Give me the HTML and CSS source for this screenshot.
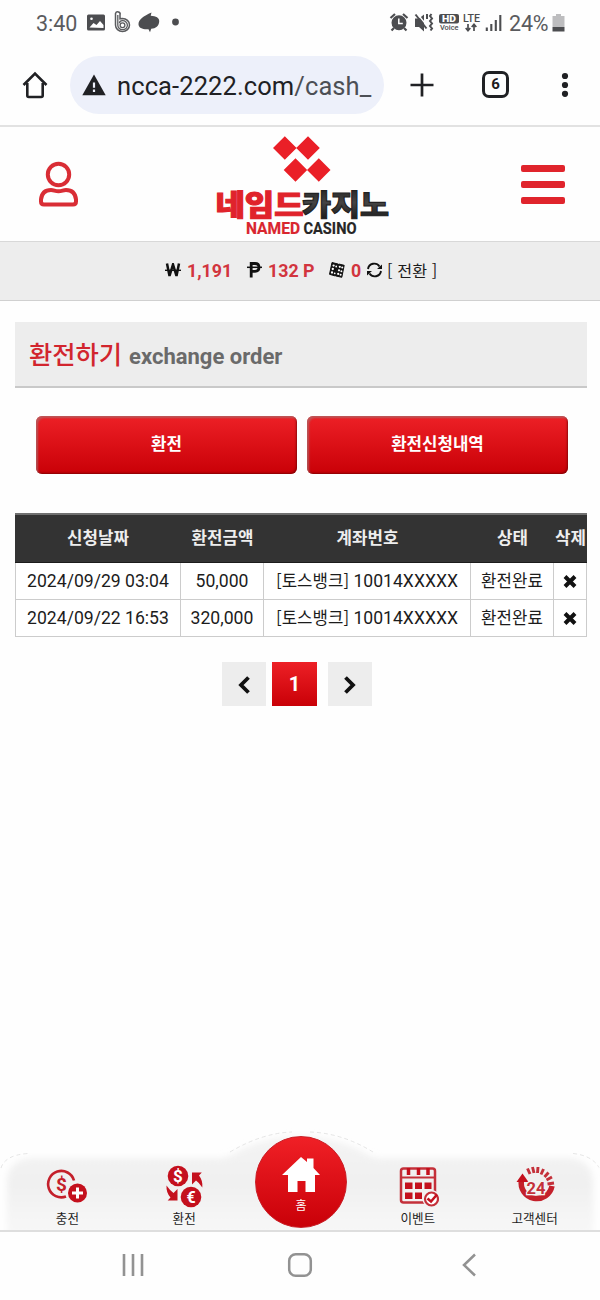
FILE: index.html
```
<!DOCTYPE html>
<html lang="ko">
<head>
<meta charset="utf-8">
<title>환전하기</title>
<link rel="stylesheet" href="styles.css">
</head>
<body>
<div class="status">
  <span class="status-time">3:40</span>
  <svg class="status-left" width="100" height="30" viewBox="82 8 100 30">
    <rect x="87" y="14.500" width="18" height="16" rx="1.500" fill="#4c4d50"/>
    <path d="M89.500 27.500l4-4.500 3 2 3.500-4 3.500 4v3z" fill="#fff"/><circle cx="91.500" cy="18.800" r="1.300" fill="#fff"/>
    <path d="M115.500 13.500v11.500a7 6.500 0 1 0 7-6.500l-2.500.300V15a2.200 2.200 0 0 0-4.500-1.500z" fill="#fff" stroke="#5a5b5e" stroke-width="1.500"/>
    <path d="M117.800 15v10a4.800 4.500 0 1 0 4.700-4.300c-2 0-3 1-3 2.500" fill="none" stroke="#5a5b5e" stroke-width="1.300"/>
    <circle cx="122.500" cy="25.200" r="2.400" fill="none" stroke="#5a5b5e" stroke-width="1.300"/>
    <path d="M151.500 12.500l-.8 3.300c5.300.2 8.800 2.200 8.500 5.700-.2 4.500-3.500 7-8 7.300l-1.200 3.400-1.500-3c-5.500.5-9.800-1.200-10-4.700-.2-5 5-8.500 13-12z" fill="#4c4d50"/>
    <circle cx="175.500" cy="22" r="3.400" fill="#4c4d50"/>
  </svg>
  <svg class="status-right" width="116" height="30" viewBox="388 8 116 30">
    <g fill="none" stroke="#4c4d50"><circle cx="399" cy="22.800" r="6.500" fill="#4c4d50" stroke-width="2"/><path d="M390.500 18l4.500-4M407.500 18l-4.500-4M394 28l-2.500 2.500M404 28l2.500 2.500" stroke-width="2.200"/><path d="M398.800 18.500v5h4" stroke="#fff" stroke-width="1.500"/></g>
    <path d="M415 18.500h4l5-4v17l-5-4.500h-4z" fill="#4c4d50"/>
    <path d="M417.500 14l9 11" stroke="#fff" stroke-width="1.300"/><path d="M415.500 14.500l11 14" stroke="#4c4d50" stroke-width="2"/>
    <path d="M427 14v5M431.500 14l-1.500 2 2 2.500-2 2.500 2 2.500-2 2.500 2 2.500-1.500 2" fill="none" stroke="#4c4d50" stroke-width="2"/>
    <rect x="439" y="14" width="20" height="9.500" rx="2" fill="#4c4d50"/>
    <text x="442" y="21.800" textLength="14" lengthAdjust="spacingAndGlyphs" class="tiny hd">HD</text>
    <text x="440" y="30" textLength="18.500" lengthAdjust="spacingAndGlyphs" class="tiny voice">Voice</text>
    <text x="463" y="21.700" textLength="17" lengthAdjust="spacingAndGlyphs" class="tiny lte">LTE</text>
    <path d="M468 24v6.500M465.700 28l2.300 2.700 2.300-2.700M474 31v-6.500M471.700 27l2.300-2.700 2.300 2.700" fill="none" stroke="#4c4d50" stroke-width="1.700"/>
    <path d="M486.800 27.500v3.500M491.300 24v7M495.800 20v11M500.300 15v16" stroke="#4c4d50" stroke-width="2.100"/>
  </svg>
  <span class="status-pct">24%</span>
  <svg class="battery" width="13" height="20" viewBox="0 0 13 20"><path d="M4 1h5v2h3.500v11H.5V3H4z" fill="#bdbdbf"/><path d="M.5 14h12v4.500H.5z" fill="#4c4d50"/></svg>
</div>
<div class="browser">
  <svg class="b-home" width="28" height="28" viewBox="0 0 28 28"><path d="M2.500 14L14 2.500 25.500 14M6.300 12v12.500q0 1.500 1.500 1.500h12.400q1.500 0 1.500-1.500V12" fill="none" stroke="#202124" stroke-width="2.600"/></svg>
  <div class="url">
    <svg width="24" height="22" viewBox="0 0 24 22"><path d="M12 .5L23.700 21.300H.3z" fill="#202124"/><path d="M12 8.500v5.200M12 15.500v2.500" stroke="#edf0fa" stroke-width="2.200"/></svg>
    <span>ncca-2222.com<i>/cash_</i></span>
  </div>
  <svg class="b-plus" width="24" height="24" viewBox="0 0 24 24"><path d="M12 0.500v23M.5 12h23" stroke="#202124" stroke-width="2.700"/></svg>
  <span class="tabs">6</span>
  <svg class="b-more" width="8" height="26" viewBox="0 0 8 26"><g fill="#202124"><circle cx="4" cy="4" r="3.100"/><circle cx="4" cy="13" r="3.100"/><circle cx="4" cy="21.800" r="3.100"/></g></svg>
</div>
<header class="site">
  <svg class="user" width="40" height="46" viewBox="0 0 40 46" fill="none" stroke="#d92d35" stroke-width="4"><circle cx="19.500" cy="13.500" r="10.700"/><path d="M5 43.500h29q3 0 3-3v-2q-1-9.500-10-9.500c-3 0-4 1.200-7.500 1.200S15 29 12 29Q3 29 2 38.500v2q0 3 3 3z"/></svg>
  <svg class="logo" width="176" height="106" viewBox="215 132 176 106">
    <defs><linearGradient id="dark" x1="0" y1="0" x2="0" y2="1"><stop offset="0" stop-color="#161616"/><stop offset=".5" stop-color="#444"/><stop offset="1" stop-color="#111"/></linearGradient></defs>
    <path d="M284.800 136.300l11.800 11.700-11.800 11.800L273 148zM308 136.300l11.800 11.700-11.800 11.800-11.800-11.800zM295.500 158.200l11.700 11.700-11.700 11.800-11.800-11.800zM318.800 158.200l11.700 11.700-11.700 11.800-11.800-11.800z" fill="#ea1f27"/>
    <text x="215.500" y="215.500" textLength="88" lengthAdjust="spacingAndGlyphs" class="logo-ko" fill="#e0232b" stroke="#e0232b">네임드</text>
    <text x="302" y="215.500" textLength="87" lengthAdjust="spacingAndGlyphs" class="logo-ko" fill="url(#dark)" stroke="#222">카지노</text>
    <text x="246" y="234" textLength="54" lengthAdjust="spacingAndGlyphs" class="logo-en" fill="#d9262e" stroke="#d9262e">NAMED</text>
    <text x="303.500" y="234" textLength="53" lengthAdjust="spacingAndGlyphs" class="logo-en" fill="#262626" stroke="#262626">CASINO</text>
  </svg>
  <span class="menu"><b></b><b></b><b></b></span>
</header>
<div class="balance">
  <svg class="won" width="16" height="15" viewBox="0 0 16 15"><path d="M2 .5l2.500 12.500L8 1.500l3.500 11.500L14 .5" fill="none" stroke="#111" stroke-width="2.500"/><path d="M0 7.300h16" stroke="#111" stroke-width="1.400"/></svg>
  <strong class="cash">1,191</strong>
  <svg class="peso" width="15" height="16" viewBox="0 0 15 16"><path d="M4.200 15.500V1.500H8q4 0 4 3.800T8 9.300H4" fill="none" stroke="#111" stroke-width="2.800"/><path d="M0 5.300h15" stroke="#111" stroke-width="1.500"/></svg>
  <strong class="point">132 P</strong>
  <svg class="dice" width="16" height="16" viewBox="0 0 16 16"><path d="M3 .500L9 2 6.500 14 .5 12.300z" fill="#111" stroke="#111"/><path d="M9.700 2l5.500 1.300-2.400 12L7 14z" fill="#111" stroke="#111"/><g fill="#fff"><circle cx="4.600" cy="3.600" r="1.150"/><circle cx="3.800" cy="7" r="1.150"/><circle cx="3" cy="10.500" r="1.150"/><circle cx="7.200" cy="4.500" r=".9"/><circle cx="5.700" cy="11.300" r=".9"/><circle cx="10.800" cy="4.800" r="1.100"/><circle cx="10" cy="8.300" r="1.100"/><circle cx="9.200" cy="11.900" r="1.100"/><circle cx="13.200" cy="5.600" r="1"/><circle cx="12.400" cy="9.200" r="1"/><circle cx="11.600" cy="12.700" r="1"/></g></svg>
  <strong class="zero">0</strong>
  <svg class="sync" width="17" height="16" viewBox="0 0 17 16"><path d="M2 7a6.300 6.300 0 0 1 11.500-2.500M15 9a6.300 6.300 0 0 1-11.500 2.500" fill="none" stroke="#111" stroke-width="1.900"/><path d="M16 2.500v4.500h-5zM1 13.500V9h5z" fill="#111"/></svg>
  <span class="convert">[ 전환 ]</span>
</div>
<main>
  <h1><span>환전하기</span><small>exchange order</small></h1>
  <div class="actions"><a>환전</a><a>환전신청내역</a></div>
  <table>
    <colgroup><col class="c1"><col class="c2"><col class="c3"><col class="c4"><col class="c5"></colgroup>
    <thead><tr><th>신청날짜</th><th>환전금액</th><th>계좌번호</th><th>상태</th><th>삭제</th></tr></thead>
    <tbody>
      <tr><td>2024/09/29 03:04</td><td>50,000</td><td><span class="ko">[토스뱅크]</span> 10014XXXXX</td><td><span class="ko">환전완료</span></td><td><svg width="14" height="13" viewBox="0 0 14 13"><path d="M2 1.500l10 10M12 1.500l-10 10" stroke="#111" stroke-width="4"/></svg></td></tr>
      <tr><td>2024/09/22 16:53</td><td>320,000</td><td><span class="ko">[토스뱅크]</span> 10014XXXXX</td><td><span class="ko">환전완료</span></td><td><svg width="14" height="13" viewBox="0 0 14 13"><path d="M2 1.500l10 10M12 1.500l-10 10" stroke="#111" stroke-width="4"/></svg></td></tr>
    </tbody>
  </table>
  <div class="pages">
    <a><svg width="14" height="18" viewBox="0 0 14 18"><path d="M11.500 1.500L4 9l7.500 7.500" fill="none" stroke="#111" stroke-width="3.800"/></svg></a>
    <a class="on">1</a>
    <a><svg width="14" height="18" viewBox="0 0 14 18"><path d="M2.500 1.500L10 9l-7.500 7.500" fill="none" stroke="#111" stroke-width="3.800"/></svg></a>
  </div>
</main>
<nav class="dock">
  <svg class="dock-bg" width="600" height="102" viewBox="0 1128 600 102">
    <defs><linearGradient id="fade" x1="0" y1="0" x2="0" y2="1"><stop offset="0" stop-color="#f4f4f4"/><stop offset=".4" stop-color="#f0f0f0"/><stop offset=".9" stop-color="#f9f9f9"/></linearGradient><filter id="soft" x="-10%" y="-10%" width="120%" height="120%"><feGaussianBlur stdDeviation="3"/></filter></defs>
    <path d="M7 1255v-72q0-23 24-25H222q10-2 20-9 58-26 116 0 10 7 20 9H569q24 2 24 25v72z" fill="url(#fade)" filter="url(#soft)"/>
    <g fill="none" stroke="#dedede" stroke-width=".8" stroke-dasharray="4 3"><path d="M1 1168q4-13 27-14.500M230 1152q32-19 62-20M310 1132q32 1 63 20M573 1153.500q19 2 26 14"/></g>
  </svg>
  <a>
    <svg width="42" height="44" viewBox="45 1164 42 44"><path d="M73 1180.500a13.200 13.200 0 1 0-8 16" fill="none" stroke="#c4202b" stroke-width="2.600"/><text x="60.500" y="1191" text-anchor="middle" class="money" font-size="19" fill="#c4202b">$</text><circle cx="76.500" cy="1193" r="9.500" fill="#c4101d"/><path d="M76.500 1187.500v11M71 1193h11" stroke="#fff" stroke-width="3"/></svg>
    <span>충전</span>
  </a>
  <a>
    <svg width="42" height="44" viewBox="162 1164 42 44" fill="#c4101d"><circle cx="177" cy="1176" r="10.300"/><circle cx="190" cy="1197" r="10.300"/><text x="177" y="1182" text-anchor="middle" class="money" font-size="17" fill="#fff">$</text><text x="190" y="1203" text-anchor="middle" class="money" font-size="16" fill="#fff">€</text><path d="M191 1172.500h9.800l-2.800 3q4 5 3.300 12-3.300-5-6.300-7l-4 4zM176.500 1200.500h-9.800l2.800-3q-4.500-5-4-12 3.500 5 7 7.500l4-4z"/></svg>
    <span>환전</span>
  </a>
  <a class="home">
    <svg width="40" height="38" viewBox="0 0 40 38"><path d="M20 1l6 5V2.500h6.500V12L39 19h-5V36h-9.500V25h-8v11H7V19H1z" fill="#fff"/></svg>
    <span>홈</span>
  </a>
  <a>
    <svg width="42" height="44" viewBox="396 1164 42 44"><rect x="400" y="1168.500" width="34" height="34" rx="2.500" fill="none" stroke="#c4303a" stroke-width="2.500"/><path d="M400 1177.500h34" stroke="#c4303a" stroke-width="2"/><path d="M407.500 1168v7M417.500 1168v7M427 1168v7" stroke="#c4101d" stroke-width="3.500"/><path d="M404 1182.500h7.500v6.500H404zM414 1182.500h7v6.500h-7zM423.500 1182.500h7v6.500h-7zM404 1192.500h7.500v6.500H404zM414 1192.500h7v6.500h-7z" fill="#c4101d"/><circle cx="430.500" cy="1199" r="9" fill="#f3f3f3"/><circle cx="430.500" cy="1199" r="6.500" fill="#fff" stroke="#c4303a" stroke-width="2.200"/><path d="M426.500 1198.500l3.500 3 6-7" fill="none" stroke="#c4101d" stroke-width="2.500"/></svg>
    <span>이벤트</span>
  </a>
  <a>
    <svg width="42" height="44" viewBox="513 1164 42 44"><path d="M520.500 1180a15 15 0 1 0 30.500 6" fill="none" stroke="#c4202b" stroke-width="5.500"/><path d="M515.500 1182l6-8.500 6 8.500z" fill="#c4101d"/><path d="M526.500 1168.500l2.500 5.500M531.500 1167l1.500 6M537 1167l-.5 6M542.500 1169l-2.500 5.500M547.500 1172.500l-4 4.500M551 1177l-5.500 3M553 1183l-6.500 1" stroke="#c4303a" stroke-width="2.900"/><text x="535" y="1193.500" text-anchor="middle" class="money" font-size="16.500" fill="#c4303a" stroke="#f4f4f4" stroke-width="2.500" paint-order="stroke">24</text></svg>
    <span>고객센터</span>
  </a>
</nav>
<div class="system">
  <svg width="24" height="24" viewBox="0 0 24 24"><path d="M2 1v22M11 1v22M20 1v22" stroke="#929292" stroke-width="2.600"/></svg>
  <svg width="26" height="26" viewBox="0 0 26 26"><rect x="2.200" y="2.200" width="21.600" height="21.600" rx="6.500" fill="none" stroke="#929292" stroke-width="2.500"/></svg>
  <svg width="16" height="24" viewBox="0 0 16 24"><path d="M14 1.500L3 12l11 10.500" fill="none" stroke="#929292" stroke-width="2.500"/></svg>
</div>
</body>
</html>
```
FILE: styles.css
```
* { box-sizing: border-box; }
body { margin: 0; width: 600px; height: 1300px; overflow: hidden; display: flex; flex-direction: column; background: #fefefe; color: #1c1c1c; font-family: Roboto, "Noto Sans CJK KR", sans-serif; }
svg { display: block; flex: none; }
.status { height: 44px; display: flex; align-items: center; padding: 2px 34px 0 36px; color: #5a5b5e; font-size: 21.5px; }
.status-time { width: 46px; }
.status-right { margin-left: 206px; }
.status-pct { margin-left: 5px; width: 42px; white-space: nowrap; letter-spacing: -.2px; }
.battery { margin-left: 1px; }
.tiny { font-family: Roboto, sans-serif; fill: #4c4d50; }
.hd { font-size: 9px; font-weight: 900; fill: #fff; }
.voice { font-size: 7.5px; font-weight: 500; }
.lte { font-size: 10.500px; font-weight: 500; }
.browser { height: 83px; border-bottom: 2px solid #e2e2e2; display: flex; align-items: center; padding: 0 0 0 21px; }
.url { flex: none; width: 314px; height: 58px; margin-left: 21px; border-radius: 29px; background: #edf0fa; display: flex; align-items: center; padding-left: 12px; gap: 11px; font-size: 25.5px; white-space: nowrap; color: #202124; }
.url span { letter-spacing: .1px; padding-top: 3px; }
.url i { font-style: normal; color: #4c4f55; }
.b-plus { margin-left: 26px; }
.tabs { flex: none; width: 27px; height: 27px; margin-left: 48px; border: 3px solid #202124; border-radius: 7px; font-size: 15px; line-height: 21px; text-align: center; font-weight: 700; }
.b-more { margin-left: 52px; }
.site { height: 115px; border-bottom: 1px solid #d8d8d8; display: flex; align-items: center; padding: 0 35px 0 39px; }
.logo { margin-left: 136px; margin-top: 2px; }
.logo-ko { font: 900 29px "Noto Sans CJK KR", sans-serif; stroke-width: 1.1px; }
.logo-en { font: 700 16.500px Roboto, sans-serif; stroke-width: .2px; }
.menu { margin-left: auto; width: 44px; display: grid; gap: 9px; }
.menu b { height: 7px; background: #e0242c; border-radius: 2px; }
.balance { height: 59px; border-bottom: 1px solid #d0d0d0; background: #ededed; display: flex; align-items: center; padding: 0 0 2px 165px; font-size: 17.800px; white-space: nowrap; }
.balance strong { color: #d2353e; font-weight: 700; }
.cash { margin-left: 6px; width: 60px; }
.point { margin-left: 6px; width: 61px; }
.zero { margin-left: 6px; width: 15px; }
.convert { margin-left: 4px; font: 16.200px "Noto Sans CJK KR", sans-serif; letter-spacing: .1px; }
main { flex: 1; padding: 21px 13px 0 15px; }
h1 { margin: 0; height: 66px; display: flex; align-items: baseline; background: #ededed; border-bottom: 2px solid #c9c9c9; padding: 13px 0 0 14px; white-space: nowrap; }
h1 span { font: 500 25.300px/36px "Noto Sans CJK KR", sans-serif; color: #d2252e; }
h1 small { margin-left: 7px; font-size: 22px; font-weight: 700; color: #6a6a6a; }
.actions { display: grid; grid-template-columns: 1fr 1fr; gap: 10px; padding: 28px 19px 0 21px; }
.actions a { height: 58px; border-radius: 6px; background: linear-gradient(#ed2026, #c90007); box-shadow: inset 2px 2px 2px rgba(170, 110, 110, .7), inset -1px -1px 2px rgba(90, 0, 0, .6); color: #fff; font: 700 16.800px/55px "Noto Sans CJK KR", sans-serif; text-align: center; }
table { width: 572px; margin-top: 39px; border-spacing: 0; table-layout: fixed; }
.c1 { width: 166px; } .c2 { width: 83px; } .c3 { width: 207px; } .c4 { width: 83px; } .c5 { width: 33px; }
th { height: 50px; padding: 0 0 3px; background: #333; border-top: 2px solid #707070; border-bottom: 1px solid #1c1c1c; color: #eee; font: 700 16.800px/20px "Noto Sans CJK KR", sans-serif; white-space: nowrap; }
td { height: 37px; padding: 0 0 1px; border-right: 1px solid #ccc; border-bottom: 1px solid #ccc; background: #fff; text-align: center; font-size: 17.600px; line-height: 20px; white-space: nowrap; }
td:first-child { border-left: 1px solid #ccc; }
td svg { margin: 1px auto 0; }
.ko { font-family: "Noto Sans CJK KR", sans-serif; font-size: 16.800px; }
.pages { display: flex; padding: 25px 0 0 207px; }
.pages a { width: 44px; height: 44px; background: #ededed; display: flex; align-items: center; justify-content: center; padding-top: 2px; }
.pages .on { width: 45px; margin: 0 11px 0 6px; background: linear-gradient(#ed2026, #c90007); color: #fff; font-weight: 700; font-size: 20px; padding: 0; }
.dock { height: 102px; position: relative; display: grid; grid-template-columns: repeat(5, 1fr); padding: 0 7px 0 9px; }
.dock-bg { position: absolute; left: 0; top: 0; }
.dock a { position: relative; padding-top: 36px; display: flex; flex-direction: column; align-items: center; font: 12.600px/18px "Noto Sans CJK KR", sans-serif; white-space: nowrap; }
.dock a > span { margin-top: 1px; }
.dock .home { width: 92px; height: 92px; margin: 8px auto 0; border-radius: 50%; padding-top: 19px; background: linear-gradient(#f02026, #c90008); border: 1px solid #c92028; color: #fff; font-size: 12px; }
.dock .home span { margin-top: 2px; }
.money { font-family: Roboto, sans-serif; font-weight: 700; }
.system { height: 70px; border-top: 2px solid #dedede; display: flex; align-items: center; padding: 0 0 2px 122px; }
.system svg:nth-child(2) { margin-left: 141px; }
.system svg:nth-child(3) { margin-left: 148px; }
```
